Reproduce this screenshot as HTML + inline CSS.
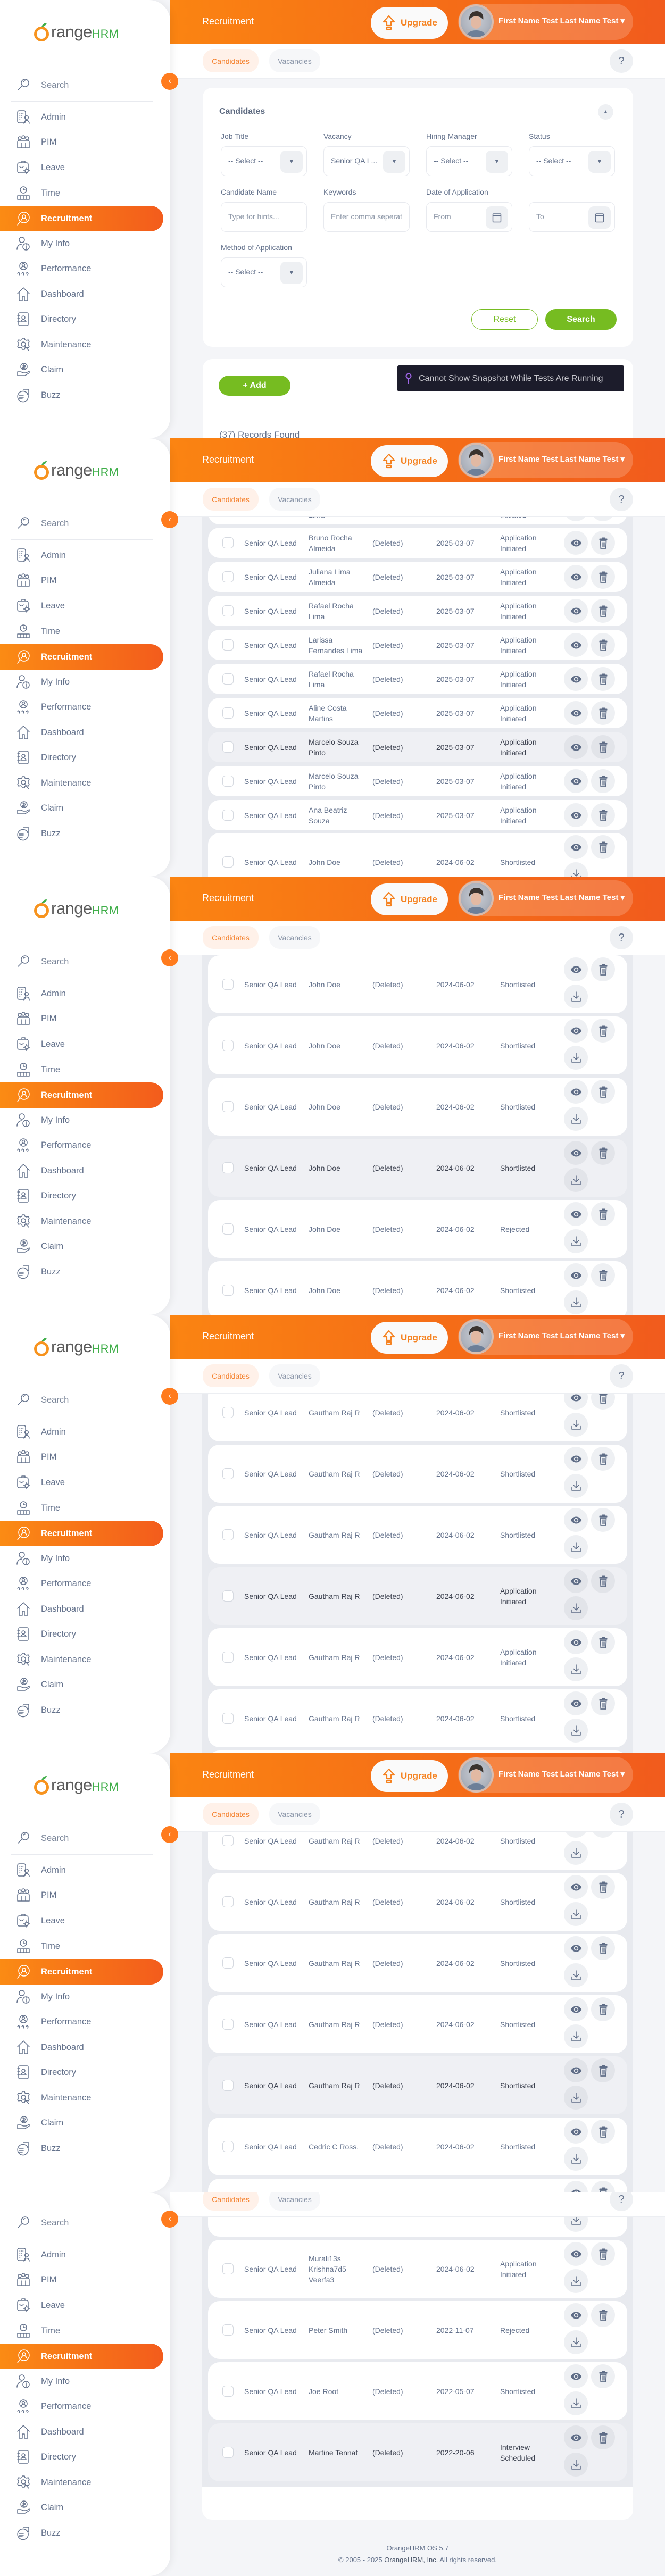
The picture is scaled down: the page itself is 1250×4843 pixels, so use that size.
<!DOCTYPE html>
<html><head><meta charset="utf-8">
<style>
*{box-sizing:border-box}
body{margin:0;width:1250px;height:4843px;position:relative;background:#f4f5f8;font-family:"Liberation Sans",sans-serif;overflow:hidden}
.f{position:absolute;left:0;width:1250px;overflow:hidden;background:#f4f5f8}
.sb{position:absolute;left:0;top:0;bottom:0;width:320px;background:#fff;border-radius:0 40px 40px 0;box-shadow:4px 0 14px rgba(0,0,0,.06);z-index:5;overflow:hidden}
.sbi{position:absolute;left:0;top:0;width:320px;height:824px}
.logo{position:absolute;left:63px;top:40px;height:40px;display:flex;align-items:center}
.logo .lg1{font-size:31px;color:#5b5b5b;letter-spacing:-0.5px;margin-left:1px}
.logo .lg2{font-size:22px;color:#3fae49;margin-top:8px}
.ni{position:absolute;left:0;width:307px;height:48px;display:flex;align-items:center;font-size:16.5px;color:#64728c}
.ni svg{width:28px;height:28px;margin-left:30px;margin-right:19px;fill:none;stroke:#64728c;stroke-width:1.5;stroke-linecap:round;stroke-linejoin:round}
.ni.act{background:linear-gradient(90deg,#fb8b14,#f35c1c);border-radius:0 26px 26px 0;color:#fff;font-weight:bold}
.ni.act svg{stroke:#fff}
.sdiv{position:absolute;left:20px;top:190px;width:268px;height:1px;background:#e8eaef}
.col{position:absolute;left:303px;width:32px;height:32px;border-radius:50%;background:#ff7b1d;color:#fff;z-index:7;display:flex;align-items:center;justify-content:center;font-size:16px}
.hd{position:absolute;left:320px;right:0;top:0;height:83px;background:linear-gradient(90deg,#fb8412,#f56d17 55%,#f15b1d);z-index:4}
.hd .ti{position:absolute;left:60px;top:30px;font-size:18px;color:#fff}
.up{position:absolute;left:377px;top:13px;width:145px;height:60px;background:#fafafa;border-radius:30px;display:flex;align-items:center;font-size:17px;font-weight:bold;color:#f58220}
.up svg{width:26px;height:30px;margin-left:21px;margin-right:9px}
.pf{position:absolute;left:541px;top:7px;width:329px;height:68px;background:rgba(255,255,255,.18);border-radius:34px}
.av{position:absolute;left:1px;top:1px;width:66px;height:66px;border-radius:50%;border:4px solid rgba(255,200,170,.55);background:radial-gradient(circle at 50% 45%,#c9ccd3 0,#aeb3bd 60%,#8f95a0 100%);overflow:hidden}
.pf .nm{position:absolute;left:76px;top:23px;font-size:15px;font-weight:bold;color:#fff;white-space:nowrap}
.tb{position:absolute;left:320px;right:0;top:83px;height:65px;background:#fff;border-bottom:1px solid #eceef2;z-index:4}
.tab{position:absolute;top:10px;height:43px;border-radius:20px;display:flex;align-items:center;justify-content:center;font-size:14px}
.t1{left:61px;width:105px;background:#fff1e9;color:#f5822f}
.t2{left:186px;width:96px;background:#f6f7f9;color:#8a95a8}
.hp{position:absolute;left:826px;top:10px;width:44px;height:44px;border-radius:50%;background:#eef0f3;color:#64728c;font-size:20px;display:flex;align-items:center;justify-content:center}
.tbg{position:absolute;left:380px;width:810px;top:0;bottom:0;background:#e8eaef}
.r{position:absolute;left:391px;width:788px;height:57px;background:#fff;border-radius:22px}
.r.T{height:109px}
.r.h{background:#eff0f4}
.c{position:absolute;top:50%;transform:translateY(-50%);font-size:14px;line-height:20px;color:#64728c;white-space:nowrap}
.r.h .c{color:#3d4250}
.c1{left:68px}.c2{left:189px}.c3{left:309px}.c4{left:429px}.c5{left:549px}
.cb{position:absolute;left:27px;top:50%;margin-top:-11px;width:21px;height:21px;border:1px solid #d5d9e0;border-radius:6px;background:#fff}
.ab{position:absolute;width:45px;height:45px;border-radius:50%;background:#eef0f3;display:flex;align-items:center;justify-content:center;top:6px}
.r.h .ab{background:#e2e4e9}
.r.T .ab{top:4px}
.e{left:669px}.t{left:720px}
.r.T .d{top:55px;left:669px}
.ab svg{width:24px;height:24px}
.card{position:absolute;left:381px;width:809px;background:#fff;border-radius:18px}
.lb{position:absolute;font-size:14px;color:#64728c}
.in{position:absolute;width:162px;height:56px;border:1px solid #e8eaef;border-radius:10px;background:#fff}
.in span{position:absolute;left:13px;top:18px;font-size:14px;color:#64728c;white-space:nowrap}
.in .ph{color:#8e98a8}
.in i{position:absolute;right:7px;top:7px;width:42px;height:42px;border-radius:10px;background:#eef0f3;display:flex;align-items:center;justify-content:center;font-style:normal;font-size:11px;color:#64728c}
.hr{position:absolute;left:412px;width:747px;height:1px;background:#e6e8ec}
</style></head><body>
<svg width="0" height="0" style="position:absolute">
<defs>
<symbol id="eye" viewBox="0 0 24 24"><path d="M12 5.5C6.8 5.5 3 9.6 1.8 12c1.2 2.4 5 6.5 10.2 6.5s9-4.1 10.2-6.5C21 9.6 17.2 5.5 12 5.5z" fill="#5f6d87"/><circle cx="12" cy="12" r="4.2" fill="#eef0f3"/><circle cx="12" cy="12" r="2.6" fill="#5f6d87"/></symbol>
<symbol id="tr" viewBox="0 0 24 24"><rect x="9" y="1.5" width="6" height="2.2" fill="#5f6d87"/><rect x="4.5" y="3.5" width="15" height="3.2" rx="1" fill="#5f6d87"/><path d="M6.5 8h11l-.8 14H7.3z" fill="none" stroke="#5f6d87" stroke-width="1.8"/><path d="M10 10.5v9M12 10.5v9M14 10.5v9" stroke="#5f6d87" stroke-width="1.2"/></symbol>
<symbol id="dl" viewBox="0 0 24 24"><path d="M12 3v12M7.5 10.5L12 15l4.5-4.5M4 14.5V20h16v-5.5" fill="none" stroke="#5f6d87" stroke-width="1.5" stroke-linecap="round" stroke-linejoin="round"/></symbol>
<symbol id="i-search" viewBox="0 0 28 28"><circle cx="17" cy="10" r="7"/><path d="M12 15l-8 8M14 8a3 3 0 0 1 3-2"/></symbol>
<symbol id="i-admin" viewBox="0 0 28 28"><rect x="3" y="2" width="15" height="23" rx="3"/><path d="M7 7h.5M10 7h.5M13 7h.5M7 11h.5M10 11h.5M7 15h.5M10 15h.5M7 19h.5"/><circle cx="20" cy="15" r="3.3"/><path d="M15 26c0-3 2-5.5 5-5.5s5 2.5 5 5.5"/></symbol>
<symbol id="i-pim" viewBox="0 0 28 28"><circle cx="7" cy="7" r="3"/><circle cx="14" cy="5" r="3"/><circle cx="21" cy="7" r="3"/><path d="M3 25V14a3 3 0 0 1 3-3h16a3 3 0 0 1 3 3v11zM10 25v-9M18 25v-9"/></symbol>
<symbol id="i-leave" viewBox="0 0 28 28"><path d="M11 4V2h6v2"/><rect x="3" y="5" width="20" height="19" rx="3"/><circle cx="20" cy="20" r="3"/><path d="M20 14v2M20 24v2M14 20h2M24 20h2M7 12c2 3 5 3 7 0"/></symbol>
<symbol id="i-time" viewBox="0 0 28 28"><circle cx="14" cy="8" r="6"/><path d="M14 5v3h3M3 26v-7h22v7zM9 19v7M15 19v7M20 19v7"/></symbol>
<symbol id="i-rec" viewBox="0 0 28 28"><circle cx="15" cy="12" r="10"/><circle cx="15" cy="10" r="3"/><path d="M10 17c1-3 3-4 5-4s4 1 5 4M8 19l-5 7"/></symbol>
<symbol id="i-my" viewBox="0 0 28 28"><circle cx="11" cy="7" r="5"/><path d="M2 25c0-6 4-10 9-10"/><circle cx="19" cy="20" r="6"/><path d="M19 18v6M19 15.5v.5"/></symbol>
<symbol id="i-perf" viewBox="0 0 28 28"><circle cx="14" cy="9" r="7"/><circle cx="14" cy="7" r="2.5"/><path d="M10 13c1-2 2.5-3 4-3s3 1 4 3M3 23l2-2 2 2-1 3M11 23l2-2 2 2-1 3M19 23l2-2 2 2-1 3"/></symbol>
<symbol id="i-dash" viewBox="0 0 28 28"><path d="M3 13L14 2l11 11M6 10v16h6v-8h4v8h6V10"/></symbol>
<symbol id="i-dir" viewBox="0 0 28 28"><rect x="5" y="2" width="18" height="24" rx="2"/><path d="M3 7h4M3 13h4M3 19h4"/><circle cx="14" cy="11" r="3"/><path d="M9 19c1-3 3-4 5-4s4 1 5 4z"/></symbol>
<symbol id="i-mnt" viewBox="0 0 28 28"><path d="M12 2h4l1 3 3 1 3-1 2 3-2 3v3l2 3-2 3-3-1-3 1-1 3h-4l-1-3-3-1-3 1-2-3 2-3v-3l-2-3 2-3 3 1 3-1z"/><circle cx="14" cy="13" r="4"/><path d="M16 16l8 9"/></symbol>
<symbol id="i-claim" viewBox="0 0 28 28"><circle cx="15" cy="8" r="6"/><path d="M15 4v8M13 6h3a1 1 0 0 1 0 3h-2a1 1 0 0 0 0 3h3M3 18h6l5 2h5l6-3v3l-8 5H3z"/></symbol>
<symbol id="i-buzz" viewBox="0 0 28 28"><path d="M10 7a10 10 0 1 1 0 19 10 10 0 0 1 0-19zM14 3h10v9h-3"/><path d="M6 15h8M6 18h8M6 21h6"/></symbol>
<symbol id="upa" viewBox="0 0 26 30"><path d="M13 2L3 13h6v7h8v-7h6z M9 23h8v4H9z" fill="none" stroke="#f58220" stroke-width="2.2" stroke-linejoin="round"/></symbol>
</defs></svg>

<!-- ============ FRAME 1 ============ -->
<div class="f" style="top:0;height:824px">
<div class="sb"><div class="sbi">
<div class="logo"><svg width="32" height="38" viewBox="0 0 32 38"><path d="M15 10c1-5 5-8 10-8-1 4-5 7-10 8z" fill="#3fae49"/><circle cx="15" cy="23" r="11.5" fill="none" stroke="#f7931e" stroke-width="5"/></svg><span class="lg1">range</span><span class="lg2">HRM</span></div>
<div class="ni" style="top:136px;color:#7c879a"><svg><use href="#i-search"/></svg>Search</div>
<div class="sdiv"></div>
<div class="ni" style="top:196px"><svg><use href="#i-admin"/></svg>Admin</div>
<div class="ni" style="top:243px"><svg><use href="#i-pim"/></svg>PIM</div>
<div class="ni" style="top:291px"><svg><use href="#i-leave"/></svg>Leave</div>
<div class="ni" style="top:339px"><svg><use href="#i-time"/></svg>Time</div>
<div class="ni act" style="top:387px"><svg><use href="#i-rec"/></svg>Recruitment</div>
<div class="ni" style="top:434px"><svg><use href="#i-my"/></svg>My Info</div>
<div class="ni" style="top:481px"><svg><use href="#i-perf"/></svg>Performance</div>
<div class="ni" style="top:529px"><svg><use href="#i-dash"/></svg>Dashboard</div>
<div class="ni" style="top:576px"><svg><use href="#i-dir"/></svg>Directory</div>
<div class="ni" style="top:624px"><svg><use href="#i-mnt"/></svg>Maintenance</div>
<div class="ni" style="top:671px"><svg><use href="#i-claim"/></svg>Claim</div>
<div class="ni" style="top:719px"><svg><use href="#i-buzz"/></svg>Buzz</div>
</div></div>
<div class="col" style="top:137px">&#8249;</div>
<div class="hd"><div class="ti">Recruitment</div><div class="up"><svg><use href="#upa"/></svg>Upgrade</div><div class="pf"><div class="av"><svg width="58" height="58" viewBox="0 0 58 58"><path d="M16 26c-1-12 6-17 14-17s14 6 12 17c-2-5-6-7-13-7s-11 2-13 7z" fill="#3a332f"/><ellipse cx="29" cy="30" rx="10" ry="12" fill="#e2b9a3"/><path d="M10 58c2-9 9-13 19-13s17 4 19 13z" fill="#6d7f98"/></svg></div><div class="nm">First Name Test Last Name Test &#9662;</div></div></div>
<div class="tb"><div class="tab t1">Candidates</div><div class="tab t2">Vacancies</div><div class="hp">?</div></div>

<div class="card" style="top:165px;height:487px"></div>
<div style="position:absolute;left:412px;top:201px;font-size:16px;font-weight:bold;color:#5d6a80">Candidates</div>
<div style="position:absolute;left:1124px;top:196px;width:29px;height:29px;border-radius:50%;background:#eef0f3;color:#64728c;font-size:10px;display:flex;align-items:center;justify-content:center">&#9650;</div>
<div class="hr" style="top:236px"></div>
<div class="lb" style="left:415px;top:248px">Job Title</div>
<div class="lb" style="left:608px;top:248px">Vacancy</div>
<div class="lb" style="left:801px;top:248px">Hiring Manager</div>
<div class="lb" style="left:994px;top:248px">Status</div>
<div class="in" style="left:415px;top:275px"><span>-- Select --</span><i>&#9660;</i></div>
<div class="in" style="left:608px;top:275px"><span>Senior QA L...</span><i>&#9660;</i></div>
<div class="in" style="left:801px;top:275px"><span>-- Select --</span><i>&#9660;</i></div>
<div class="in" style="left:994px;top:275px"><span>-- Select --</span><i>&#9660;</i></div>
<div class="lb" style="left:415px;top:353px">Candidate Name</div>
<div class="lb" style="left:608px;top:353px">Keywords</div>
<div class="lb" style="left:801px;top:353px">Date of Application</div>
<div class="in" style="left:415px;top:380px"><span class="ph">Type for hints...</span></div>
<div class="in" style="left:608px;top:380px;overflow:hidden"><span class="ph">Enter comma seperat</span></div>
<div class="in" style="left:801px;top:380px"><span class="ph">From</span><i><svg width="18" height="20" viewBox="0 0 18 20"><rect x="1.5" y="3" width="15" height="15.5" rx="1.5" fill="none" stroke="#64728c" stroke-width="1.5"/><path d="M1.5 6.5h15" stroke="#64728c" stroke-width="2"/></svg></i></div>
<div class="in" style="left:994px;top:380px"><span class="ph">To</span><i><svg width="18" height="20" viewBox="0 0 18 20"><rect x="1.5" y="3" width="15" height="15.5" rx="1.5" fill="none" stroke="#64728c" stroke-width="1.5"/><path d="M1.5 6.5h15" stroke="#64728c" stroke-width="2"/></svg></i></div>
<div class="lb" style="left:415px;top:457px">Method of Application</div>
<div class="in" style="left:415px;top:484px"><span>-- Select --</span><i>&#9660;</i></div>
<div class="hr" style="top:571px"></div>
<div style="position:absolute;left:886px;top:581px;width:125px;height:39px;border:1px solid #76bc21;border-radius:20px;color:#76bc21;font-size:16px;display:flex;align-items:center;justify-content:center">Reset</div>
<div style="position:absolute;left:1025px;top:581px;width:134px;height:39px;background:#76bc21;border-radius:20px;color:#fff;font-size:16px;font-weight:bold;display:flex;align-items:center;justify-content:center">Search</div>

<div class="card" style="top:675px;height:300px"></div>
<div style="position:absolute;left:411px;top:706px;width:135px;height:38px;background:#76bc21;border-radius:19px;color:#fff;font-size:16px;font-weight:bold;display:flex;align-items:center;justify-content:center">+ Add</div>
<div style="position:absolute;left:747px;top:687px;width:426px;height:49px;background:#1c1c2b;border-radius:3px;display:flex;align-items:center;color:#c6c6cc;font-size:16px;white-space:nowrap"><svg width="14" height="22" viewBox="0 0 14 22" style="margin-left:14px;margin-right:12px"><circle cx="7" cy="6" r="4.5" fill="none" stroke="#a066e8" stroke-width="2"/><path d="M7 10.5V20" stroke="#a066e8" stroke-width="2"/></svg>Cannot Show Snapshot While Tests Are Running</div>
<div class="hr" style="top:776px"></div>
<div style="position:absolute;left:412px;top:808px;font-size:17px;color:#64728c">(37) Records Found</div>
</div>

<!-- ============ FRAME 2 ============ -->
<div class="f" style="top:824px;height:824px">
<div class="tbg"></div>
<div class="r" style="top:105px"><i class="cb"></i><span class="c c1">Senior QA Lead</span><span class="c c2">Rafael Rocha<br>Lima</span><span class="c c3">(Deleted)</span><span class="c c4">2025-03-07</span><span class="c c5">Application<br>Initiated</span><b class="ab e"><svg><use href="#eye"/></svg></b><b class="ab t"><svg><use href="#tr"/></svg></b></div>
<div class="r" style="top:168px"><i class="cb"></i><span class="c c1">Senior QA Lead</span><span class="c c2">Bruno Rocha<br>Almeida</span><span class="c c3">(Deleted)</span><span class="c c4">2025-03-07</span><span class="c c5">Application<br>Initiated</span><b class="ab e"><svg><use href="#eye"/></svg></b><b class="ab t"><svg><use href="#tr"/></svg></b></div>
<div class="r" style="top:232px"><i class="cb"></i><span class="c c1">Senior QA Lead</span><span class="c c2">Juliana Lima<br>Almeida</span><span class="c c3">(Deleted)</span><span class="c c4">2025-03-07</span><span class="c c5">Application<br>Initiated</span><b class="ab e"><svg><use href="#eye"/></svg></b><b class="ab t"><svg><use href="#tr"/></svg></b></div>
<div class="r" style="top:296px"><i class="cb"></i><span class="c c1">Senior QA Lead</span><span class="c c2">Rafael Rocha<br>Lima</span><span class="c c3">(Deleted)</span><span class="c c4">2025-03-07</span><span class="c c5">Application<br>Initiated</span><b class="ab e"><svg><use href="#eye"/></svg></b><b class="ab t"><svg><use href="#tr"/></svg></b></div>
<div class="r" style="top:360px"><i class="cb"></i><span class="c c1">Senior QA Lead</span><span class="c c2">Larissa<br>Fernandes Lima</span><span class="c c3">(Deleted)</span><span class="c c4">2025-03-07</span><span class="c c5">Application<br>Initiated</span><b class="ab e"><svg><use href="#eye"/></svg></b><b class="ab t"><svg><use href="#tr"/></svg></b></div>
<div class="r" style="top:424px"><i class="cb"></i><span class="c c1">Senior QA Lead</span><span class="c c2">Rafael Rocha<br>Lima</span><span class="c c3">(Deleted)</span><span class="c c4">2025-03-07</span><span class="c c5">Application<br>Initiated</span><b class="ab e"><svg><use href="#eye"/></svg></b><b class="ab t"><svg><use href="#tr"/></svg></b></div>
<div class="r" style="top:488px"><i class="cb"></i><span class="c c1">Senior QA Lead</span><span class="c c2">Aline Costa<br>Martins</span><span class="c c3">(Deleted)</span><span class="c c4">2025-03-07</span><span class="c c5">Application<br>Initiated</span><b class="ab e"><svg><use href="#eye"/></svg></b><b class="ab t"><svg><use href="#tr"/></svg></b></div>
<div class="r h" style="top:552px"><i class="cb"></i><span class="c c1">Senior QA Lead</span><span class="c c2">Marcelo Souza<br>Pinto</span><span class="c c3">(Deleted)</span><span class="c c4">2025-03-07</span><span class="c c5">Application<br>Initiated</span><b class="ab e"><svg><use href="#eye"/></svg></b><b class="ab t"><svg><use href="#tr"/></svg></b></div>
<div class="r" style="top:616px"><i class="cb"></i><span class="c c1">Senior QA Lead</span><span class="c c2">Marcelo Souza<br>Pinto</span><span class="c c3">(Deleted)</span><span class="c c4">2025-03-07</span><span class="c c5">Application<br>Initiated</span><b class="ab e"><svg><use href="#eye"/></svg></b><b class="ab t"><svg><use href="#tr"/></svg></b></div>
<div class="r" style="top:680px"><i class="cb"></i><span class="c c1">Senior QA Lead</span><span class="c c2">Ana Beatriz<br>Souza</span><span class="c c3">(Deleted)</span><span class="c c4">2025-03-07</span><span class="c c5">Application<br>Initiated</span><b class="ab e"><svg><use href="#eye"/></svg></b><b class="ab t"><svg><use href="#tr"/></svg></b></div>
<div class="r T" style="top:742px"><i class="cb"></i><span class="c c1">Senior QA Lead</span><span class="c c2">John Doe</span><span class="c c3">(Deleted)</span><span class="c c4">2024-06-02</span><span class="c c5">Shortlisted</span><b class="ab e"><svg><use href="#eye"/></svg></b><b class="ab t"><svg><use href="#tr"/></svg></b><b class="ab d"><svg><use href="#dl"/></svg></b></div>
<div class="sb"><div class="sbi">
<div class="logo"><svg width="32" height="38" viewBox="0 0 32 38"><path d="M15 10c1-5 5-8 10-8-1 4-5 7-10 8z" fill="#3fae49"/><circle cx="15" cy="23" r="11.5" fill="none" stroke="#f7931e" stroke-width="5"/></svg><span class="lg1">range</span><span class="lg2">HRM</span></div>
<div class="ni" style="top:136px;color:#7c879a"><svg><use href="#i-search"/></svg>Search</div>
<div class="sdiv"></div>
<div class="ni" style="top:196px"><svg><use href="#i-admin"/></svg>Admin</div>
<div class="ni" style="top:243px"><svg><use href="#i-pim"/></svg>PIM</div>
<div class="ni" style="top:291px"><svg><use href="#i-leave"/></svg>Leave</div>
<div class="ni" style="top:339px"><svg><use href="#i-time"/></svg>Time</div>
<div class="ni act" style="top:387px"><svg><use href="#i-rec"/></svg>Recruitment</div>
<div class="ni" style="top:434px"><svg><use href="#i-my"/></svg>My Info</div>
<div class="ni" style="top:481px"><svg><use href="#i-perf"/></svg>Performance</div>
<div class="ni" style="top:529px"><svg><use href="#i-dash"/></svg>Dashboard</div>
<div class="ni" style="top:576px"><svg><use href="#i-dir"/></svg>Directory</div>
<div class="ni" style="top:624px"><svg><use href="#i-mnt"/></svg>Maintenance</div>
<div class="ni" style="top:671px"><svg><use href="#i-claim"/></svg>Claim</div>
<div class="ni" style="top:719px"><svg><use href="#i-buzz"/></svg>Buzz</div>
</div></div>
<div class="col" style="top:137px">&#8249;</div>
<div class="hd"><div class="ti">Recruitment</div><div class="up"><svg><use href="#upa"/></svg>Upgrade</div><div class="pf"><div class="av"><svg width="58" height="58" viewBox="0 0 58 58"><path d="M16 26c-1-12 6-17 14-17s14 6 12 17c-2-5-6-7-13-7s-11 2-13 7z" fill="#3a332f"/><ellipse cx="29" cy="30" rx="10" ry="12" fill="#e2b9a3"/><path d="M10 58c2-9 9-13 19-13s17 4 19 13z" fill="#6d7f98"/></svg></div><div class="nm">First Name Test Last Name Test &#9662;</div></div></div>
<div class="tb"><div class="tab t1">Candidates</div><div class="tab t2">Vacancies</div><div class="hp">?</div></div>
</div>

<!-- ============ FRAME 3 ============ -->
<div class="f" style="top:1648px;height:824px">
<div class="tbg"></div>
<div class="r T" style="top:148px"><i class="cb"></i><span class="c c1">Senior QA Lead</span><span class="c c2">John Doe</span><span class="c c3">(Deleted)</span><span class="c c4">2024-06-02</span><span class="c c5">Shortlisted</span><b class="ab e"><svg><use href="#eye"/></svg></b><b class="ab t"><svg><use href="#tr"/></svg></b><b class="ab d"><svg><use href="#dl"/></svg></b></div>
<div class="r T" style="top:263px"><i class="cb"></i><span class="c c1">Senior QA Lead</span><span class="c c2">John Doe</span><span class="c c3">(Deleted)</span><span class="c c4">2024-06-02</span><span class="c c5">Shortlisted</span><b class="ab e"><svg><use href="#eye"/></svg></b><b class="ab t"><svg><use href="#tr"/></svg></b><b class="ab d"><svg><use href="#dl"/></svg></b></div>
<div class="r T" style="top:378px"><i class="cb"></i><span class="c c1">Senior QA Lead</span><span class="c c2">John Doe</span><span class="c c3">(Deleted)</span><span class="c c4">2024-06-02</span><span class="c c5">Shortlisted</span><b class="ab e"><svg><use href="#eye"/></svg></b><b class="ab t"><svg><use href="#tr"/></svg></b><b class="ab d"><svg><use href="#dl"/></svg></b></div>
<div class="r T h" style="top:493px"><i class="cb"></i><span class="c c1">Senior QA Lead</span><span class="c c2">John Doe</span><span class="c c3">(Deleted)</span><span class="c c4">2024-06-02</span><span class="c c5">Shortlisted</span><b class="ab e"><svg><use href="#eye"/></svg></b><b class="ab t"><svg><use href="#tr"/></svg></b><b class="ab d"><svg><use href="#dl"/></svg></b></div>
<div class="r T" style="top:608px"><i class="cb"></i><span class="c c1">Senior QA Lead</span><span class="c c2">John Doe</span><span class="c c3">(Deleted)</span><span class="c c4">2024-06-02</span><span class="c c5">Rejected</span><b class="ab e"><svg><use href="#eye"/></svg></b><b class="ab t"><svg><use href="#tr"/></svg></b><b class="ab d"><svg><use href="#dl"/></svg></b></div>
<div class="r T" style="top:723px"><i class="cb"></i><span class="c c1">Senior QA Lead</span><span class="c c2">John Doe</span><span class="c c3">(Deleted)</span><span class="c c4">2024-06-02</span><span class="c c5">Shortlisted</span><b class="ab e"><svg><use href="#eye"/></svg></b><b class="ab t"><svg><use href="#tr"/></svg></b><b class="ab d"><svg><use href="#dl"/></svg></b></div>
<div class="sb"><div class="sbi">
<div class="logo"><svg width="32" height="38" viewBox="0 0 32 38"><path d="M15 10c1-5 5-8 10-8-1 4-5 7-10 8z" fill="#3fae49"/><circle cx="15" cy="23" r="11.5" fill="none" stroke="#f7931e" stroke-width="5"/></svg><span class="lg1">range</span><span class="lg2">HRM</span></div>
<div class="ni" style="top:136px;color:#7c879a"><svg><use href="#i-search"/></svg>Search</div>
<div class="sdiv"></div>
<div class="ni" style="top:196px"><svg><use href="#i-admin"/></svg>Admin</div>
<div class="ni" style="top:243px"><svg><use href="#i-pim"/></svg>PIM</div>
<div class="ni" style="top:291px"><svg><use href="#i-leave"/></svg>Leave</div>
<div class="ni" style="top:339px"><svg><use href="#i-time"/></svg>Time</div>
<div class="ni act" style="top:387px"><svg><use href="#i-rec"/></svg>Recruitment</div>
<div class="ni" style="top:434px"><svg><use href="#i-my"/></svg>My Info</div>
<div class="ni" style="top:481px"><svg><use href="#i-perf"/></svg>Performance</div>
<div class="ni" style="top:529px"><svg><use href="#i-dash"/></svg>Dashboard</div>
<div class="ni" style="top:576px"><svg><use href="#i-dir"/></svg>Directory</div>
<div class="ni" style="top:624px"><svg><use href="#i-mnt"/></svg>Maintenance</div>
<div class="ni" style="top:671px"><svg><use href="#i-claim"/></svg>Claim</div>
<div class="ni" style="top:719px"><svg><use href="#i-buzz"/></svg>Buzz</div>
</div></div>
<div class="col" style="top:137px">&#8249;</div>
<div class="hd"><div class="ti">Recruitment</div><div class="up"><svg><use href="#upa"/></svg>Upgrade</div><div class="pf"><div class="av"><svg width="58" height="58" viewBox="0 0 58 58"><path d="M16 26c-1-12 6-17 14-17s14 6 12 17c-2-5-6-7-13-7s-11 2-13 7z" fill="#3a332f"/><ellipse cx="29" cy="30" rx="10" ry="12" fill="#e2b9a3"/><path d="M10 58c2-9 9-13 19-13s17 4 19 13z" fill="#6d7f98"/></svg></div><div class="nm">First Name Test Last Name Test &#9662;</div></div></div>
<div class="tb"><div class="tab t1">Candidates</div><div class="tab t2">Vacancies</div><div class="hp">?</div></div>
</div>

<!-- ============ FRAME 4 ============ -->
<div class="f" style="top:2472px;height:824px">
<div class="tbg"></div>
<div class="r T" style="top:129px"><i class="cb"></i><span class="c c1">Senior QA Lead</span><span class="c c2">Gautham Raj R</span><span class="c c3">(Deleted)</span><span class="c c4">2024-06-02</span><span class="c c5">Shortlisted</span><b class="ab e"><svg><use href="#eye"/></svg></b><b class="ab t"><svg><use href="#tr"/></svg></b><b class="ab d"><svg><use href="#dl"/></svg></b></div>
<div class="r T" style="top:244px"><i class="cb"></i><span class="c c1">Senior QA Lead</span><span class="c c2">Gautham Raj R</span><span class="c c3">(Deleted)</span><span class="c c4">2024-06-02</span><span class="c c5">Shortlisted</span><b class="ab e"><svg><use href="#eye"/></svg></b><b class="ab t"><svg><use href="#tr"/></svg></b><b class="ab d"><svg><use href="#dl"/></svg></b></div>
<div class="r T" style="top:359px"><i class="cb"></i><span class="c c1">Senior QA Lead</span><span class="c c2">Gautham Raj R</span><span class="c c3">(Deleted)</span><span class="c c4">2024-06-02</span><span class="c c5">Shortlisted</span><b class="ab e"><svg><use href="#eye"/></svg></b><b class="ab t"><svg><use href="#tr"/></svg></b><b class="ab d"><svg><use href="#dl"/></svg></b></div>
<div class="r T h" style="top:474px"><i class="cb"></i><span class="c c1">Senior QA Lead</span><span class="c c2">Gautham Raj R</span><span class="c c3">(Deleted)</span><span class="c c4">2024-06-02</span><span class="c c5">Application<br>Initiated</span><b class="ab e"><svg><use href="#eye"/></svg></b><b class="ab t"><svg><use href="#tr"/></svg></b><b class="ab d"><svg><use href="#dl"/></svg></b></div>
<div class="r T" style="top:589px"><i class="cb"></i><span class="c c1">Senior QA Lead</span><span class="c c2">Gautham Raj R</span><span class="c c3">(Deleted)</span><span class="c c4">2024-06-02</span><span class="c c5">Application<br>Initiated</span><b class="ab e"><svg><use href="#eye"/></svg></b><b class="ab t"><svg><use href="#tr"/></svg></b><b class="ab d"><svg><use href="#dl"/></svg></b></div>
<div class="r T" style="top:704px"><i class="cb"></i><span class="c c1">Senior QA Lead</span><span class="c c2">Gautham Raj R</span><span class="c c3">(Deleted)</span><span class="c c4">2024-06-02</span><span class="c c5">Shortlisted</span><b class="ab e"><svg><use href="#eye"/></svg></b><b class="ab t"><svg><use href="#tr"/></svg></b><b class="ab d"><svg><use href="#dl"/></svg></b></div>
<div class="r T" style="top:819px"><i class="cb"></i><span class="c c1">Senior QA Lead</span><span class="c c2">Gautham Raj R</span><span class="c c3">(Deleted)</span><span class="c c4">2024-06-02</span><span class="c c5">Shortlisted</span><b class="ab e"><svg><use href="#eye"/></svg></b><b class="ab t"><svg><use href="#tr"/></svg></b><b class="ab d"><svg><use href="#dl"/></svg></b></div>
<div class="sb"><div class="sbi">
<div class="logo"><svg width="32" height="38" viewBox="0 0 32 38"><path d="M15 10c1-5 5-8 10-8-1 4-5 7-10 8z" fill="#3fae49"/><circle cx="15" cy="23" r="11.5" fill="none" stroke="#f7931e" stroke-width="5"/></svg><span class="lg1">range</span><span class="lg2">HRM</span></div>
<div class="ni" style="top:136px;color:#7c879a"><svg><use href="#i-search"/></svg>Search</div>
<div class="sdiv"></div>
<div class="ni" style="top:196px"><svg><use href="#i-admin"/></svg>Admin</div>
<div class="ni" style="top:243px"><svg><use href="#i-pim"/></svg>PIM</div>
<div class="ni" style="top:291px"><svg><use href="#i-leave"/></svg>Leave</div>
<div class="ni" style="top:339px"><svg><use href="#i-time"/></svg>Time</div>
<div class="ni act" style="top:387px"><svg><use href="#i-rec"/></svg>Recruitment</div>
<div class="ni" style="top:434px"><svg><use href="#i-my"/></svg>My Info</div>
<div class="ni" style="top:481px"><svg><use href="#i-perf"/></svg>Performance</div>
<div class="ni" style="top:529px"><svg><use href="#i-dash"/></svg>Dashboard</div>
<div class="ni" style="top:576px"><svg><use href="#i-dir"/></svg>Directory</div>
<div class="ni" style="top:624px"><svg><use href="#i-mnt"/></svg>Maintenance</div>
<div class="ni" style="top:671px"><svg><use href="#i-claim"/></svg>Claim</div>
<div class="ni" style="top:719px"><svg><use href="#i-buzz"/></svg>Buzz</div>
</div></div>
<div class="col" style="top:137px">&#8249;</div>
<div class="hd"><div class="ti">Recruitment</div><div class="up"><svg><use href="#upa"/></svg>Upgrade</div><div class="pf"><div class="av"><svg width="58" height="58" viewBox="0 0 58 58"><path d="M16 26c-1-12 6-17 14-17s14 6 12 17c-2-5-6-7-13-7s-11 2-13 7z" fill="#3a332f"/><ellipse cx="29" cy="30" rx="10" ry="12" fill="#e2b9a3"/><path d="M10 58c2-9 9-13 19-13s17 4 19 13z" fill="#6d7f98"/></svg></div><div class="nm">First Name Test Last Name Test &#9662;</div></div></div>
<div class="tb"><div class="tab t1">Candidates</div><div class="tab t2">Vacancies</div><div class="hp">?</div></div>
</div>

<!-- ============ FRAME 5 ============ -->
<div class="f" style="top:3296px;height:826px">
<div class="tbg"></div>
<div class="r T" style="top:110px"><i class="cb"></i><span class="c c1">Senior QA Lead</span><span class="c c2">Gautham Raj R</span><span class="c c3">(Deleted)</span><span class="c c4">2024-06-02</span><span class="c c5">Shortlisted</span><b class="ab e"><svg><use href="#eye"/></svg></b><b class="ab t"><svg><use href="#tr"/></svg></b><b class="ab d"><svg><use href="#dl"/></svg></b></div>
<div class="r T" style="top:225px"><i class="cb"></i><span class="c c1">Senior QA Lead</span><span class="c c2">Gautham Raj R</span><span class="c c3">(Deleted)</span><span class="c c4">2024-06-02</span><span class="c c5">Shortlisted</span><b class="ab e"><svg><use href="#eye"/></svg></b><b class="ab t"><svg><use href="#tr"/></svg></b><b class="ab d"><svg><use href="#dl"/></svg></b></div>
<div class="r T" style="top:340px"><i class="cb"></i><span class="c c1">Senior QA Lead</span><span class="c c2">Gautham Raj R</span><span class="c c3">(Deleted)</span><span class="c c4">2024-06-02</span><span class="c c5">Shortlisted</span><b class="ab e"><svg><use href="#eye"/></svg></b><b class="ab t"><svg><use href="#tr"/></svg></b><b class="ab d"><svg><use href="#dl"/></svg></b></div>
<div class="r T" style="top:455px"><i class="cb"></i><span class="c c1">Senior QA Lead</span><span class="c c2">Gautham Raj R</span><span class="c c3">(Deleted)</span><span class="c c4">2024-06-02</span><span class="c c5">Shortlisted</span><b class="ab e"><svg><use href="#eye"/></svg></b><b class="ab t"><svg><use href="#tr"/></svg></b><b class="ab d"><svg><use href="#dl"/></svg></b></div>
<div class="r T h" style="top:570px"><i class="cb"></i><span class="c c1">Senior QA Lead</span><span class="c c2">Gautham Raj R</span><span class="c c3">(Deleted)</span><span class="c c4">2024-06-02</span><span class="c c5">Shortlisted</span><b class="ab e"><svg><use href="#eye"/></svg></b><b class="ab t"><svg><use href="#tr"/></svg></b><b class="ab d"><svg><use href="#dl"/></svg></b></div>
<div class="r T" style="top:685px"><i class="cb"></i><span class="c c1">Senior QA Lead</span><span class="c c2">Cedric C Ross.</span><span class="c c3">(Deleted)</span><span class="c c4">2024-06-02</span><span class="c c5">Shortlisted</span><b class="ab e"><svg><use href="#eye"/></svg></b><b class="ab t"><svg><use href="#tr"/></svg></b><b class="ab d"><svg><use href="#dl"/></svg></b></div>
<div class="r T" style="top:800px"><i class="cb"></i><span class="c c1">Senior QA Lead</span><span class="c c2">Gautham Raj R</span><span class="c c3">(Deleted)</span><span class="c c4">2024-06-02</span><span class="c c5">Shortlisted</span><b class="ab e"><svg><use href="#eye"/></svg></b><b class="ab t"><svg><use href="#tr"/></svg></b><b class="ab d"><svg><use href="#dl"/></svg></b></div>
<div class="sb"><div class="sbi">
<div class="logo"><svg width="32" height="38" viewBox="0 0 32 38"><path d="M15 10c1-5 5-8 10-8-1 4-5 7-10 8z" fill="#3fae49"/><circle cx="15" cy="23" r="11.5" fill="none" stroke="#f7931e" stroke-width="5"/></svg><span class="lg1">range</span><span class="lg2">HRM</span></div>
<div class="ni" style="top:136px;color:#7c879a"><svg><use href="#i-search"/></svg>Search</div>
<div class="sdiv"></div>
<div class="ni" style="top:196px"><svg><use href="#i-admin"/></svg>Admin</div>
<div class="ni" style="top:243px"><svg><use href="#i-pim"/></svg>PIM</div>
<div class="ni" style="top:291px"><svg><use href="#i-leave"/></svg>Leave</div>
<div class="ni" style="top:339px"><svg><use href="#i-time"/></svg>Time</div>
<div class="ni act" style="top:387px"><svg><use href="#i-rec"/></svg>Recruitment</div>
<div class="ni" style="top:434px"><svg><use href="#i-my"/></svg>My Info</div>
<div class="ni" style="top:481px"><svg><use href="#i-perf"/></svg>Performance</div>
<div class="ni" style="top:529px"><svg><use href="#i-dash"/></svg>Dashboard</div>
<div class="ni" style="top:576px"><svg><use href="#i-dir"/></svg>Directory</div>
<div class="ni" style="top:624px"><svg><use href="#i-mnt"/></svg>Maintenance</div>
<div class="ni" style="top:671px"><svg><use href="#i-claim"/></svg>Claim</div>
<div class="ni" style="top:719px"><svg><use href="#i-buzz"/></svg>Buzz</div>
</div></div>
<div class="col" style="top:137px">&#8249;</div>
<div class="hd"><div class="ti">Recruitment</div><div class="up"><svg><use href="#upa"/></svg>Upgrade</div><div class="pf"><div class="av"><svg width="58" height="58" viewBox="0 0 58 58"><path d="M16 26c-1-12 6-17 14-17s14 6 12 17c-2-5-6-7-13-7s-11 2-13 7z" fill="#3a332f"/><ellipse cx="29" cy="30" rx="10" ry="12" fill="#e2b9a3"/><path d="M10 58c2-9 9-13 19-13s17 4 19 13z" fill="#6d7f98"/></svg></div><div class="nm">First Name Test Last Name Test &#9662;</div></div></div>
<div class="tb"><div class="tab t1">Candidates</div><div class="tab t2">Vacancies</div><div class="hp">?</div></div>
</div>

<!-- ============ FRAME 6 ============ -->
<div class="f" style="top:4122px;height:721px">
<div class="tbg" style="bottom:auto;top:0;height:553px"></div>
<div style="position:absolute;left:380px;width:810px;top:553px;height:62px;background:#fff;border-radius:0 0 18px 18px"></div>
<div class="r T" style="top:-26px"><i class="cb"></i><span class="c c1">Senior QA Lead</span><span class="c c2">Gautham Raj R</span><span class="c c3">(Deleted)</span><span class="c c4">2024-06-02</span><span class="c c5">Shortlisted</span><b class="ab e"><svg><use href="#eye"/></svg></b><b class="ab t"><svg><use href="#tr"/></svg></b><b class="ab d"><svg><use href="#dl"/></svg></b></div>
<div class="r T" style="top:89px"><i class="cb"></i><span class="c c1">Senior QA Lead</span><span class="c c2">Murali13s<br>Krishna7d5<br>Veerfa3</span><span class="c c3">(Deleted)</span><span class="c c4">2024-06-02</span><span class="c c5">Application<br>Initiated</span><b class="ab e"><svg><use href="#eye"/></svg></b><b class="ab t"><svg><use href="#tr"/></svg></b><b class="ab d"><svg><use href="#dl"/></svg></b></div>
<div class="r T" style="top:204px"><i class="cb"></i><span class="c c1">Senior QA Lead</span><span class="c c2">Peter Smith</span><span class="c c3">(Deleted)</span><span class="c c4">2022-11-07</span><span class="c c5">Rejected</span><b class="ab e"><svg><use href="#eye"/></svg></b><b class="ab t"><svg><use href="#tr"/></svg></b><b class="ab d"><svg><use href="#dl"/></svg></b></div>
<div class="r T" style="top:319px"><i class="cb"></i><span class="c c1">Senior QA Lead</span><span class="c c2">Joe Root</span><span class="c c3">(Deleted)</span><span class="c c4">2022-05-07</span><span class="c c5">Shortlisted</span><b class="ab e"><svg><use href="#eye"/></svg></b><b class="ab t"><svg><use href="#tr"/></svg></b><b class="ab d"><svg><use href="#dl"/></svg></b></div>
<div class="r T h" style="top:434px"><i class="cb"></i><span class="c c1">Senior QA Lead</span><span class="c c2">Martine Tennat</span><span class="c c3">(Deleted)</span><span class="c c4">2022-20-06</span><span class="c c5">Interview<br>Scheduled</span><b class="ab e"><svg><use href="#eye"/></svg></b><b class="ab t"><svg><use href="#tr"/></svg></b><b class="ab d"><svg><use href="#dl"/></svg></b></div>
<div style="position:absolute;left:320px;width:930px;top:658px;text-align:center;font-size:13px;color:#64728c;line-height:22px">OrangeHRM OS 5.7<br>&copy; 2005 - 2025 <span style="text-decoration:underline;color:#4a5568">OrangeHRM, Inc</span>. All rights reserved.</div>
<div class="sb"><div class="sbi" style="top:-103px">
<div class="ni" style="top:136px;color:#7c879a"><svg><use href="#i-search"/></svg>Search</div>
<div class="sdiv"></div>
<div class="ni" style="top:196px"><svg><use href="#i-admin"/></svg>Admin</div>
<div class="ni" style="top:243px"><svg><use href="#i-pim"/></svg>PIM</div>
<div class="ni" style="top:291px"><svg><use href="#i-leave"/></svg>Leave</div>
<div class="ni" style="top:339px"><svg><use href="#i-time"/></svg>Time</div>
<div class="ni act" style="top:387px"><svg><use href="#i-rec"/></svg>Recruitment</div>
<div class="ni" style="top:434px"><svg><use href="#i-my"/></svg>My Info</div>
<div class="ni" style="top:481px"><svg><use href="#i-perf"/></svg>Performance</div>
<div class="ni" style="top:529px"><svg><use href="#i-dash"/></svg>Dashboard</div>
<div class="ni" style="top:576px"><svg><use href="#i-dir"/></svg>Directory</div>
<div class="ni" style="top:624px"><svg><use href="#i-mnt"/></svg>Maintenance</div>
<div class="ni" style="top:671px"><svg><use href="#i-claim"/></svg>Claim</div>
<div class="ni" style="top:719px"><svg><use href="#i-buzz"/></svg>Buzz</div>
</div></div>
<div class="col" style="top:34px">&#8249;</div>
<div class="tb" style="top:-19px"><div class="tab t1">Candidates</div><div class="tab t2">Vacancies</div><div class="hp">?</div></div>
</div>
</body></html>
